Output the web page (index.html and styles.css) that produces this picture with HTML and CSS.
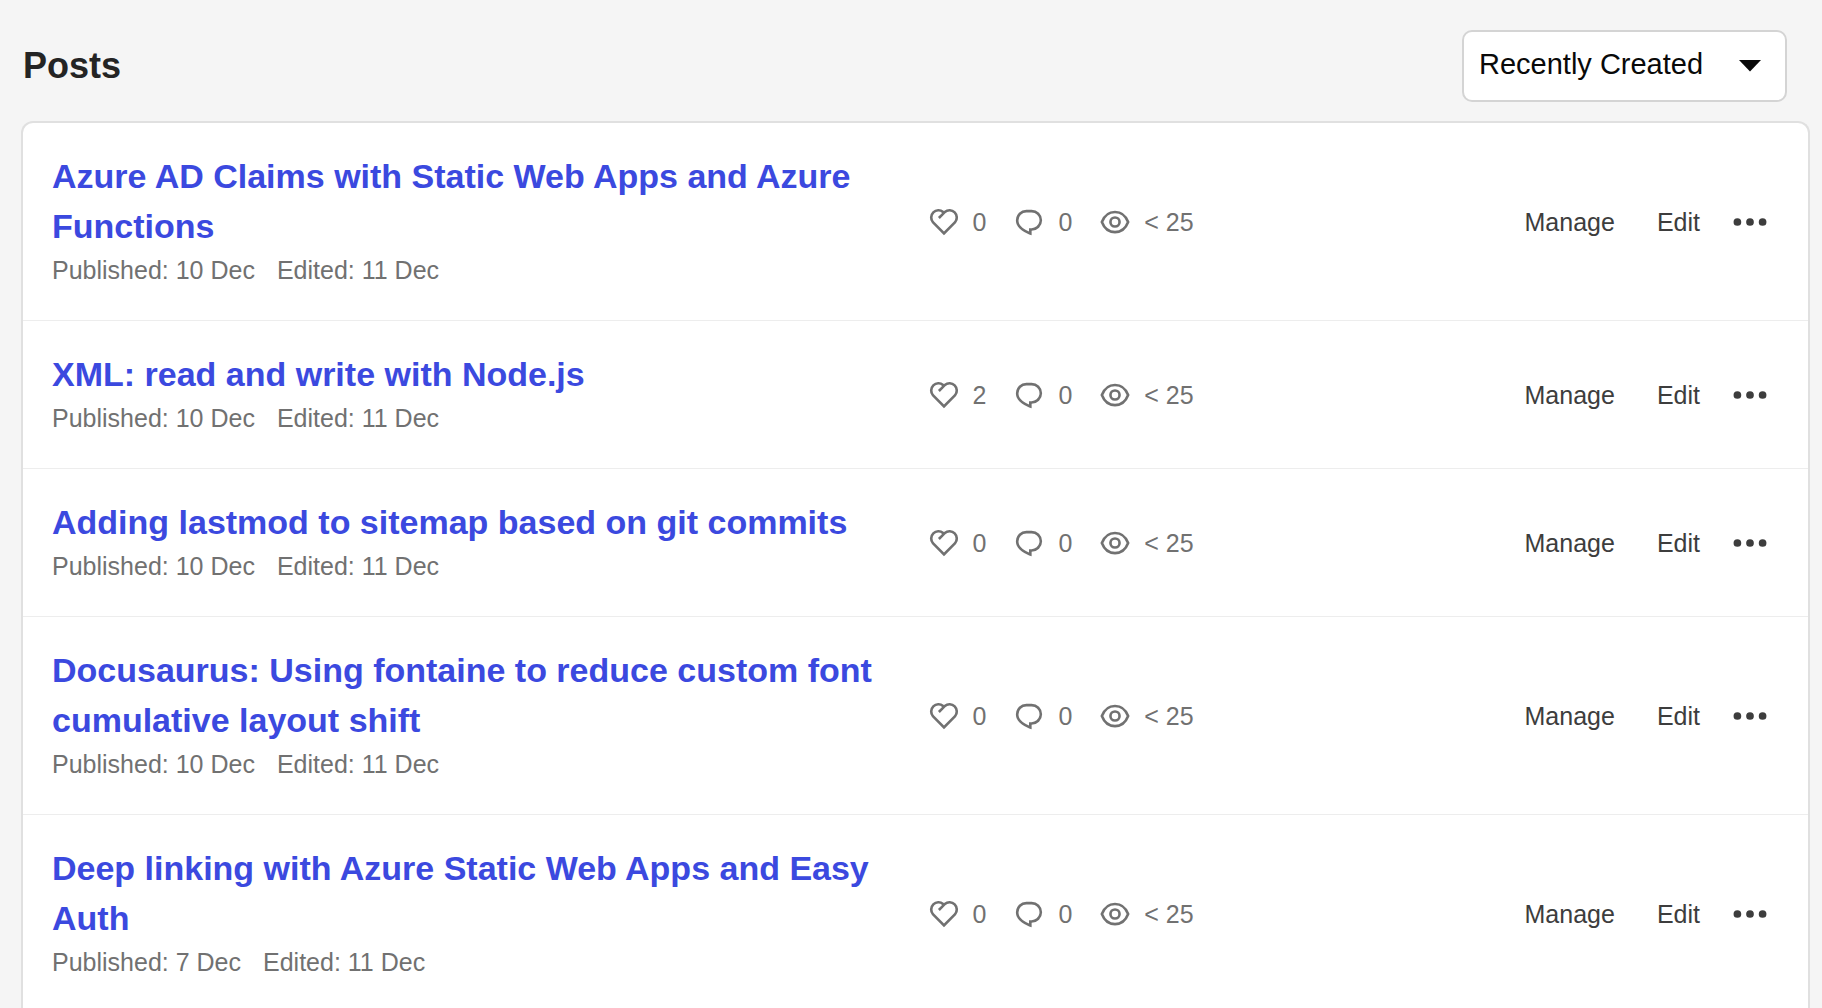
FILE: index.html
```html
<!DOCTYPE html>
<html lang="en">
<head>
<meta charset="utf-8">
<meta name="viewport" content="width=device-width, initial-scale=1">
<title>Posts</title>
<link rel="stylesheet" href="styles.css">
</head>
<body>
<svg class="sprite" aria-hidden="true">
  <symbol id="heart" viewBox="0 0 24 24"><path d="M18.884 12.595l.01.011L12 19.5l-6.894-6.894.01-.01A4.875 4.875 0 0112 5.73a4.875 4.875 0 016.884 6.865zM6.431 7.037a3.375 3.375 0 000 4.773L12 17.38l5.569-5.569a3.375 3.375 0 10-4.773-4.773L9.613 10.22l-1.06-1.062 2.371-2.372a3.375 3.375 0 00-4.492.25v.001z"/></symbol>
  <symbol id="comment" viewBox="0 0 24 24"><path d="M10.5 5h3a6 6 0 110 12v2.625c-3.75-1.5-9-3.75-9-8.625a6 6 0 016-6zM12 15.5h1.5a4.501 4.501 0 001.722-8.657A4.5 4.5 0 0013.5 6.5h-3A4.5 4.5 0 006 11c0 2.707 1.846 4.475 6 6.36V15.5z"/></symbol>
  <symbol id="eye" viewBox="0 0 24 24"><g fill="none" stroke="currentColor" stroke-width="1.5"><path d="M4.5 12C5.9 8.3 8.7 6.25 12 6.25S18.1 8.3 19.5 12C18.1 15.7 15.3 17.75 12 17.75S5.9 15.7 4.5 12z"/><circle cx="12" cy="12" r="2.6"/></g></symbol>
  <symbol id="dots" viewBox="0 0 24 24"><circle cx="4.8" cy="12" r="2.2"/><circle cx="12" cy="12" r="2.2"/><circle cx="19.2" cy="12" r="2.2"/></symbol>
</svg>

<header class="header">
  <h1 class="heading">Posts</h1>
  <div class="sort">
    <select class="sort-select" aria-label="Sort posts">
      <option>Recently Created</option>
    </select>
    <svg class="sort-arrow" viewBox="0 0 22 12" aria-hidden="true"><path d="M0 0h22L11 11.500z"/></svg>
  </div>
</header>

<main class="card">
  <article class="post">
    <div class="summary">
      <h2 class="title"><a href="#">Azure AD Claims with Static Web Apps and Azure Functions</a></h2>
      <p class="dates"><span>Published: 10 Dec</span><span>Edited: 11 Dec</span></p>
    </div>
    <div class="details">
      <div class="stats">
        <span class="stat"><svg class="icon"><use href="#heart"/></svg>0</span>
        <span class="stat"><svg class="icon"><use href="#comment"/></svg>0</span>
        <span class="stat"><svg class="icon"><use href="#eye"/></svg>&lt; 25</span>
      </div>
      <div class="actions">
        <a class="action" href="#">Manage</a>
        <a class="action" href="#">Edit</a>
        <button class="more" type="button" aria-label="More options"><svg class="dots"><use href="#dots"/></svg></button>
      </div>
    </div>
  </article>

  <article class="post">
    <div class="summary">
      <h2 class="title"><a href="#">XML: read and write with Node.js</a></h2>
      <p class="dates"><span>Published: 10 Dec</span><span>Edited: 11 Dec</span></p>
    </div>
    <div class="details">
      <div class="stats">
        <span class="stat"><svg class="icon"><use href="#heart"/></svg>2</span>
        <span class="stat"><svg class="icon"><use href="#comment"/></svg>0</span>
        <span class="stat"><svg class="icon"><use href="#eye"/></svg>&lt; 25</span>
      </div>
      <div class="actions">
        <a class="action" href="#">Manage</a>
        <a class="action" href="#">Edit</a>
        <button class="more" type="button" aria-label="More options"><svg class="dots"><use href="#dots"/></svg></button>
      </div>
    </div>
  </article>

  <article class="post">
    <div class="summary">
      <h2 class="title"><a href="#">Adding lastmod to sitemap based on git commits</a></h2>
      <p class="dates"><span>Published: 10 Dec</span><span>Edited: 11 Dec</span></p>
    </div>
    <div class="details">
      <div class="stats">
        <span class="stat"><svg class="icon"><use href="#heart"/></svg>0</span>
        <span class="stat"><svg class="icon"><use href="#comment"/></svg>0</span>
        <span class="stat"><svg class="icon"><use href="#eye"/></svg>&lt; 25</span>
      </div>
      <div class="actions">
        <a class="action" href="#">Manage</a>
        <a class="action" href="#">Edit</a>
        <button class="more" type="button" aria-label="More options"><svg class="dots"><use href="#dots"/></svg></button>
      </div>
    </div>
  </article>

  <article class="post">
    <div class="summary">
      <h2 class="title"><a href="#">Docusaurus: Using fontaine to reduce custom font cumulative layout shift</a></h2>
      <p class="dates"><span>Published: 10 Dec</span><span>Edited: 11 Dec</span></p>
    </div>
    <div class="details">
      <div class="stats">
        <span class="stat"><svg class="icon"><use href="#heart"/></svg>0</span>
        <span class="stat"><svg class="icon"><use href="#comment"/></svg>0</span>
        <span class="stat"><svg class="icon"><use href="#eye"/></svg>&lt; 25</span>
      </div>
      <div class="actions">
        <a class="action" href="#">Manage</a>
        <a class="action" href="#">Edit</a>
        <button class="more" type="button" aria-label="More options"><svg class="dots"><use href="#dots"/></svg></button>
      </div>
    </div>
  </article>

  <article class="post">
    <div class="summary">
      <h2 class="title"><a href="#">Deep linking with Azure Static Web Apps and Easy Auth</a></h2>
      <p class="dates"><span>Published: 7 Dec</span><span>Edited: 11 Dec</span></p>
    </div>
    <div class="details">
      <div class="stats">
        <span class="stat"><svg class="icon"><use href="#heart"/></svg>0</span>
        <span class="stat"><svg class="icon"><use href="#comment"/></svg>0</span>
        <span class="stat"><svg class="icon"><use href="#eye"/></svg>&lt; 25</span>
      </div>
      <div class="actions">
        <a class="action" href="#">Manage</a>
        <a class="action" href="#">Edit</a>
        <button class="more" type="button" aria-label="More options"><svg class="dots"><use href="#dots"/></svg></button>
      </div>
    </div>
  </article>
</main>
</body>
</html>
```

FILE: styles.css
```css
* {
  box-sizing: border-box;
}

html {
  scrollbar-width: none;
}

body {
  margin: 0;
  padding: 30px 12px 0 21px;
  background: #f5f5f5;
  color: #242424;
  font-family: "Liberation Sans", Arial, sans-serif;
  font-size: 25px;
  line-height: 38px;
}

.sprite {
  display: none;
}

.header {
  display: flex;
  align-items: center;
  justify-content: space-between;
  padding: 0 23px 0 2px;
  margin-bottom: 19px;
}

.heading {
  margin: 0;
  font-size: 36px;
  line-height: 44px;
}

.sort {
  display: grid;
  align-items: center;
}

.sort-select {
  grid-area: 1 / 1;
  appearance: none;
  width: 325px;
  height: 72px;
  padding: 0 72px 4px 15px;
  border: 2px solid #d4d4d4;
  border-radius: 10px;
  background: #fff;
  color: #090909;
  font: inherit;
  font-size: 29px;
}

.sort-arrow {
  grid-area: 1 / 1;
  justify-self: end;
  width: 22px;
  height: 12px;
  margin-right: 26px;
  fill: #090909;
  pointer-events: none;
}

.card {
  border: 2px solid #e0e0e0;
  border-bottom: 0;
  border-radius: 12px 12px 0 0;
  background: #fff;
}

.post {
  display: grid;
  grid-template-columns: 1fr 1fr;
  gap: 14px;
  align-items: center;
  padding: 28px 29px;
  border-bottom: 1px solid #ededed;
}

.summary {
  padding-bottom: 3px;
}

.title {
  margin: 0;
  font-size: 34px;
  line-height: 50px;
}

.title a {
  color: #3b49df;
  text-decoration: none;
}

.dates {
  display: flex;
  gap: 22px;
  margin: 0;
  color: #717171;
}

.details,
.stats,
.stat,
.actions {
  display: flex;
  align-items: center;
}

.details {
  justify-content: space-between;
}

.stats {
  gap: 22px;
  color: #717171;
}

.stat {
  gap: 8px;
}

.icon,
.dots {
  width: 42px;
  height: 42px;
  fill: currentColor;
}

.action {
  padding: 0 21px;
  color: #3d3d3d;
  text-decoration: none;
}

.more {
  display: flex;
  padding: 0 8px;
  border: 0;
  background: none;
  color: #3d3d3d;
}
```
